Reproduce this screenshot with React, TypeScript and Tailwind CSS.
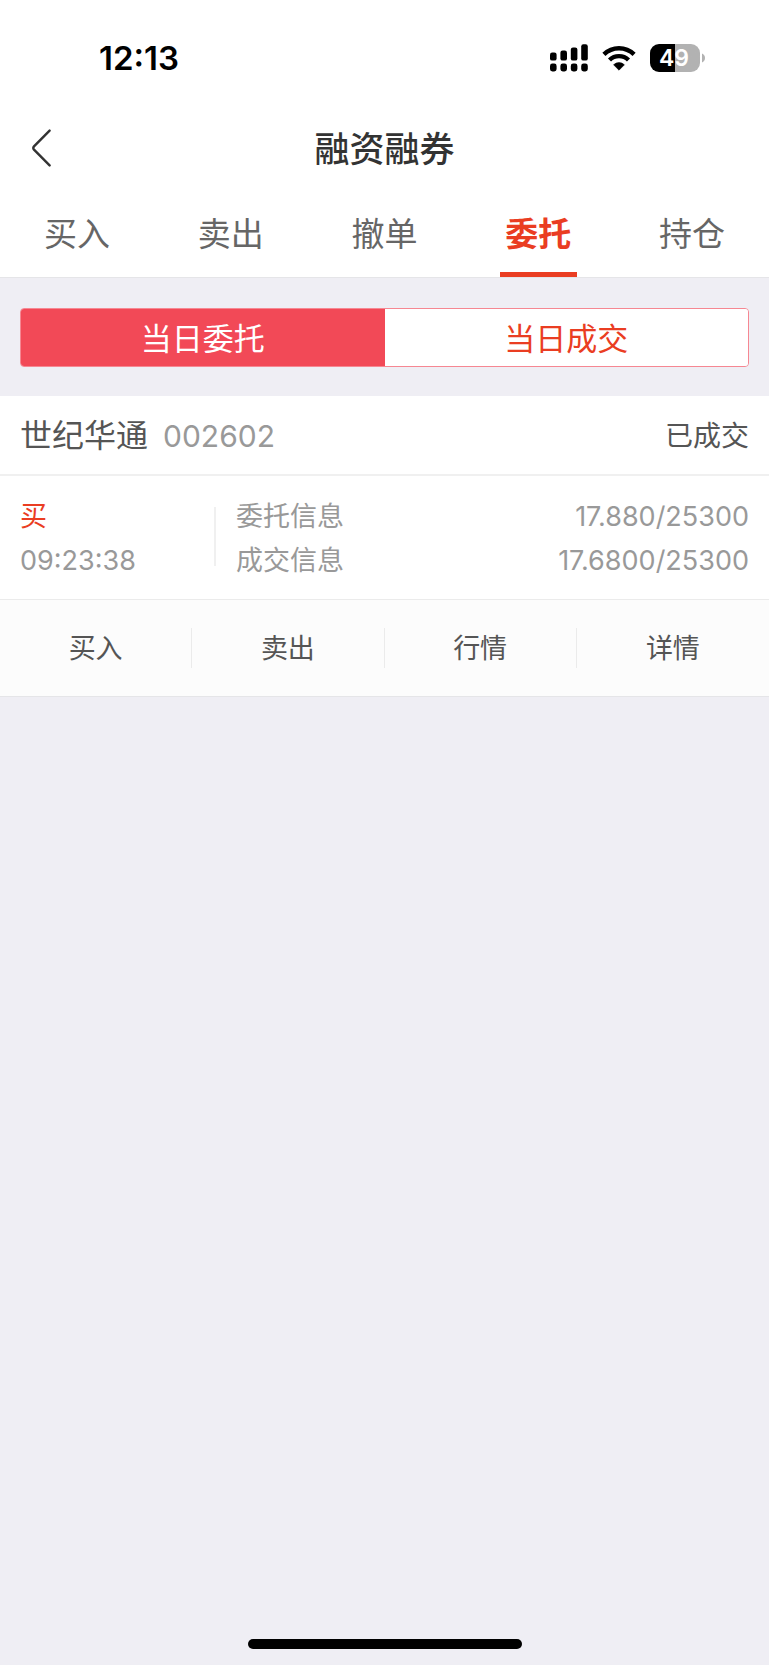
import React, { useState } from "react";

const TABS = ["买入", "卖出", "撤单", "委托", "持仓"];
const SEGMENTS = ["当日委托", "当日成交"];
const ACTIONS = ["买入", "卖出", "行情", "详情"];

function SignalIcon() {
  return (
    <svg width="38" height="28" viewBox="0 0 38 28" aria-hidden="true">
      <rect x="0" y="8.6" width="6.6" height="8" rx="2.2" />
      <rect x="10.4" y="6.6" width="6.6" height="10" rx="2.2" />
      <rect x="20.8" y="3.6" width="6.6" height="13" rx="2.2" />
      <rect x="31.2" y="0.3" width="6.6" height="16.3" rx="2.2" />
      <rect x="0" y="19.6" width="6.6" height="7.8" rx="2.4" />
      <rect x="10.4" y="19.6" width="6.6" height="7.8" rx="2.4" />
      <rect x="20.8" y="19.6" width="6.6" height="7.8" rx="2.4" />
      <rect x="31.2" y="19.6" width="6.6" height="7.8" rx="2.4" />
    </svg>
  );
}

function WifiIcon() {
  return (
    <svg width="34" height="26" viewBox="0 0 34 26" aria-hidden="true">
      <g fill="none" stroke="#000" strokeWidth="4.4">
        <path d="M1.9 9.4 A21.6 21.6 0 0 1 32.1 9.4" />
        <path d="M7.5 15 A13.6 13.6 0 0 1 26.5 15" />
      </g>
      <path d="M17 25.2 L11.6 19.8 A7.7 7.7 0 0 1 22.4 19.8 Z" stroke="#000" strokeWidth="0.6" strokeLinejoin="round" />
    </svg>
  );
}

function Battery() {
  return (
    <div className="flex items-center gap-[2px]">
      <div className="flex h-[28px] w-[50px] items-center justify-center rounded-[9px] bg-linear-to-r from-black from-50% to-[#b2b2b2] to-50% pr-[2px]">
        <span className="text-[23px] leading-[28px] font-semibold text-white">49</span>
      </div>
      <svg width="3" height="10" viewBox="0 0 3 10" aria-hidden="true">
        <path d="M0 0.5 C1.8 1.2 3 3 3 5 S1.8 8.8 0 9.5 Z" fill="#b2b2b2" />
      </svg>
    </div>
  );
}

export default function App() {
  const [tab, setTab] = useState(3);
  const [segment, setSegment] = useState(0);

  return (
    <div className="flex min-h-screen flex-col bg-[#efeef4] font-['Inter','Noto_Sans_CJK_SC',sans-serif] text-[#555]">
      <header className="bg-white">
        <div className="flex h-[114px] items-center justify-between pt-[2px] pr-[64px] pl-[99px] text-black">
          <time className="text-[33px] leading-[40px] font-semibold">12:13</time>
          <div className="flex items-center gap-[14px]">
            <SignalIcon />
            <WifiIcon />
            <Battery />
          </div>
        </div>

        <div className="grid h-[68px] grid-cols-[80px_1fr_80px] items-center">
          <button type="button" aria-label="返回" className="flex h-full items-center pl-[31px]">
            <svg width="20" height="38" viewBox="0 0 20 38" fill="none" aria-hidden="true">
              <path d="M18.6 1.6 L3 17.4 Q1.6 19 3 20.6 L18.6 36.4" stroke="#333" strokeWidth="2.4" strokeLinecap="round" />
            </svg>
          </button>
          <h1 className="pt-[2px] text-center text-[35px] leading-[48px] font-medium text-[#333]">融资融券</h1>
        </div>

        <nav className="grid h-[96px] grid-cols-5 border-b border-[#e5e5e8]">
          {TABS.map((label, i) => (
            <button
              key={label}
              type="button"
              onClick={() => setTab(i)}
              className={
                "flex flex-col items-center justify-between pt-[28px] text-[33px] leading-[48px] " +
                (tab === i ? "font-bold text-[#ea3d22]" : "text-[#666]")
              }
            >
              {label}
              <span className={"h-[5px] w-1/2 " + (tab === i ? "bg-[#ea3d22]" : "bg-transparent")} />
            </button>
          ))}
        </nav>
      </header>

      <main className="flex-1">
        <div className="px-5 pt-[30px] pb-[29px]">
          <div className="grid h-[59px] grid-cols-2 overflow-hidden rounded-[4px] border border-[#f68792]">
            {SEGMENTS.map((label, i) => (
              <button
                key={label}
                type="button"
                onClick={() => setSegment(i)}
                className={
                  "pt-[3px] text-[31px] leading-[48px] " +
                  (segment === i ? "bg-[#f24957] text-white" : "bg-white text-[#ea3d22]")
                }
              >
                {label}
              </button>
            ))}
          </div>
        </div>

        <article className="bg-white">
          <div className="flex h-[80px] items-center justify-between border-b-2 border-[#f0f0f0] px-5 pt-[2px]">
            <h2 className="flex items-center gap-[15px] text-[32px] leading-[48px]">
              <span>世纪华通</span>
              <span className="text-[30px] text-[#999]">002602</span>
            </h2>
            <span className="text-[28px] leading-[44px]">已成交</span>
          </div>

          <div className="flex items-center border-b border-[#ebebeb] px-5 pt-[19px] pb-[16px] text-[27px] leading-[44px] text-[#999]">
            <div className="flex w-[194px] shrink-0 flex-col">
              <span className="text-[#ea3d22]">买</span>
              <time>09:23:38</time>
            </div>
            <dl className="relative flex flex-1 flex-col pl-[22px]">
              <div className="flex justify-between">
                <dt>委托信息</dt>
                <dd>17.880/25300</dd>
              </div>
              <div className="flex justify-between">
                <dt>成交信息</dt>
                <dd>17.6800/25300</dd>
              </div>
              <span className="absolute top-[12px] left-0 h-[59px] w-[2px] bg-[#f0f0f0]" />
            </dl>
          </div>

          <div className="grid grid-cols-4 divide-x divide-[#ebebeb] border-b border-[#e5e5e8] bg-[#fcfcfc] py-[28px]">
            {ACTIONS.map((label) => (
              <button key={label} type="button" className="h-[40px] pt-[2px] text-[27px] leading-[38px]">
                {label}
              </button>
            ))}
          </div>
        </article>
      </main>

      <footer className="flex justify-center pb-4">
        <div className="h-[10px] w-[274px] rounded-full bg-black" />
      </footer>
    </div>
  );
}
